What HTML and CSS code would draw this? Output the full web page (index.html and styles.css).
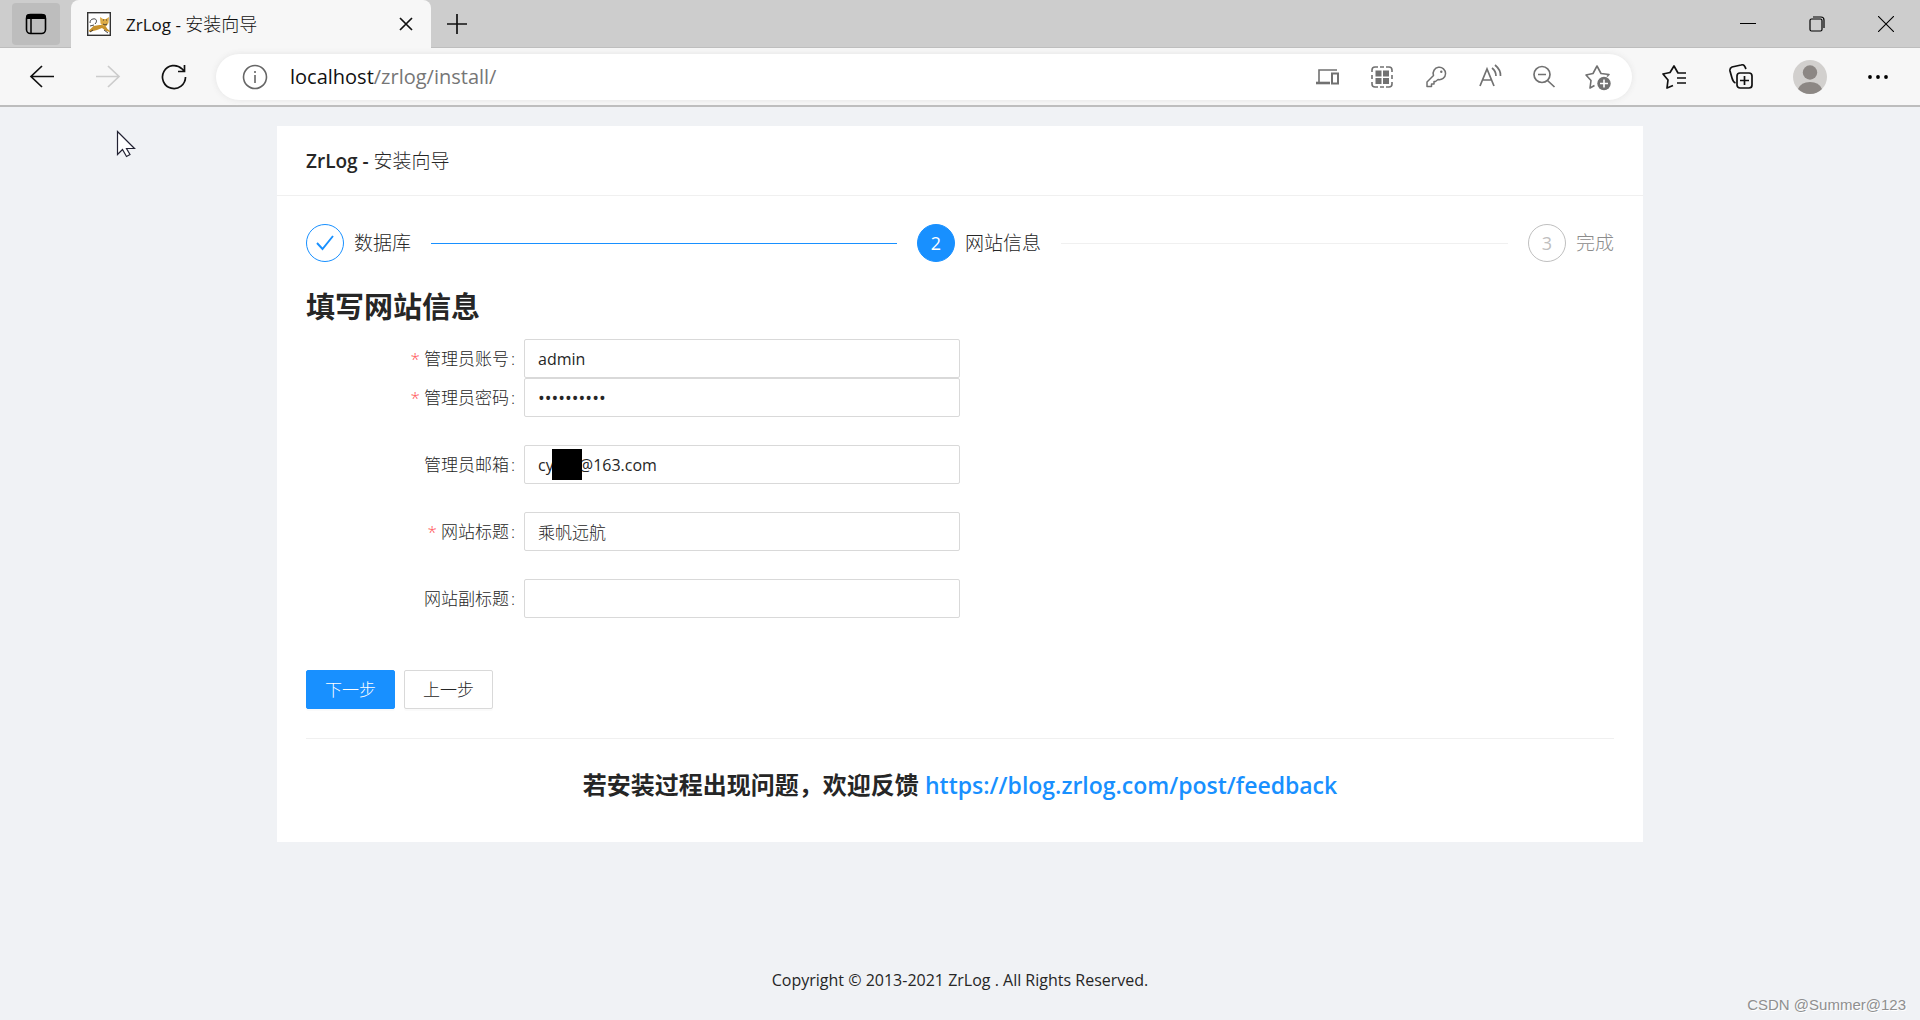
FILE: index.html
```html
<!DOCTYPE html>
<html lang="zh-CN">
<head>
<meta charset="utf-8">
<title>ZrLog - 安装向导</title>
<link rel="stylesheet" href="styles.css">
</head>
<body>
<header class="browser">
  <div class="tabstrip">
    <button class="tab-actions" type="button" aria-label="Tab actions">
      <svg width="24" height="24" viewBox="0 0 24 24"><rect x="2.500" y="2.500" width="19" height="19" rx="4" fill="none" stroke="#000" stroke-width="1.600"/><path d="M2 7V5a3 3 0 0 1 3-3h14a3 3 0 0 1 3 3v2z"/><path d="M7 7v14" stroke="#000" stroke-width="1.500"/></svg>
    </button>
    <div class="tab">
      <svg class="favicon" width="24" height="24" viewBox="0 0 24 24"><rect x=".7" y=".7" width="22.600" height="22.600" fill="#fff" stroke="#333" stroke-width="1.400"/><path d="M1.500 19l5-5 6-1 3 0 3 1 2 3 2.500 2v1l-4-1-4-3-5 2-4 1-3 1z" fill="#c8922c"/><path d="M13 5l3 2h3l3-2-.5 6-2 3-3 .5-3-3z" fill="#dcaa45"/><path d="M16 8h1M19 8h1M16 12l2 1 2-1M8 12c3-3 1-6-2-5-2 0-3 2-3 4M3 14l4-1M3 20l3-2M17 18l4 3" stroke="#333" stroke-width=".9" fill="none"/></svg>
      <span class="tab-title">ZrLog - <span class="cjk">安装向导</span></span>
      <button class="icon-button tab-close" type="button" aria-label="Close tab"><svg width="14" height="14" viewBox="0 0 14 14"><path d="M1 1l12 12M13 1L1 13" stroke="#111" stroke-width="1.700"/></svg></button>
    </div>
    <button class="icon-button new-tab" type="button" aria-label="New tab"><svg width="22" height="22" viewBox="0 0 22 22"><path d="M11 1v20M1 11h20" stroke="#111" stroke-width="1.700"/></svg></button>
    <div class="window-controls">
      <button class="icon-button" type="button" aria-label="Minimize"><svg width="16" height="16" viewBox="0 0 16 16"><path d="M0 7.500h16" stroke="#000"/></svg></button>
      <button class="icon-button" type="button" aria-label="Restore"><svg width="16" height="16" viewBox="0 0 16 16" fill="none" stroke="#000" stroke-width="1.200"><rect x="1" y="3" width="12" height="12" rx="1.500"/><path d="M4 1h8q3 0 3 3v8"/></svg></button>
      <button class="icon-button" type="button" aria-label="Close"><svg width="16" height="16" viewBox="0 0 16 16"><path d="M0 0l16 16M16 0L0 16" stroke="#000" stroke-width="1.100"/></svg></button>
    </div>
  </div>
  <div class="toolbar">
    <nav class="history" aria-label="History">
      <button class="icon-button" type="button" aria-label="Back"><svg width="26" height="26" viewBox="0 0 26 26" fill="none" stroke="#111" stroke-width="1.700"><path d="M25 12.500H2M13 2L2 12.500l11 10.500"/></svg></button>
      <button class="icon-button" type="button" aria-label="Forward"><svg width="26" height="26" viewBox="0 0 26 26" fill="none" stroke="#ccc" stroke-width="1.700"><path d="M1 12.500h23M13 2l11 10.500-11 10.500"/></svg></button>
      <button class="icon-button" type="button" aria-label="Refresh"><svg width="26" height="26" viewBox="0 0 26 26" fill="none" stroke="#111" stroke-width="1.700"><path d="M24.500 13A11.500 11.500 0 1 1 21 4.800L23 7M23.500 1v6.500H17"/></svg></button>
    </nav>
    <div class="address">
      <svg width="26" height="26" viewBox="0 0 26 26" fill="none" stroke="#666" stroke-width="1.600"><circle cx="13" cy="13" r="11.500"/><path d="M13 11v8M13 7v2"/></svg>
      <p class="url">localhost<span class="url-path">/zrlog/install/</span></p>
      <div class="address-icons">
        <button class="icon-button" type="button" aria-label="Devices"><svg width="24" height="24" viewBox="0 0 24 24" fill="none" stroke="#717171"><path d="M3 17V5h18" stroke-width="1.600"/><path d="M0 18h14" stroke-width="2.600"/><rect x="16" y="8.500" width="6" height="10" stroke-width="2"/></svg></button>
        <button class="icon-button" type="button" aria-label="QR code"><svg width="24" height="24" viewBox="0 0 24 24" fill="none" stroke="#717171" stroke-width="1.600"><path d="M2 7V5q0-3 3-3h3M10 2h4M16 2h3q3 0 3 3v2M2 10v4M22 10v4M2 17v2q0 3 3 3h3M10 22h4M16 22h3q3 0 3-3v-2"/><path fill="#717171" stroke="none" d="M5.500 5.500h6v6h-6zM13 5.500h6v6h-6zM5.500 13h6v6h-6zM13 13h6v6h-6z"/></svg></button>
        <button class="icon-button" type="button" aria-label="Passwords"><svg width="24" height="24" viewBox="0 0 24 24" fill="none" stroke="#717171" stroke-width="1.500"><path d="M9.500 10.500A6.200 6.200 0 1 1 14 14.500L11.500 16.500H10V19H7.500V21.500H3V17z" stroke-linejoin="round"/><circle cx="17.300" cy="6.700" r="1.200" fill="#717171" stroke="none"/></svg></button>
        <button class="icon-button" type="button" aria-label="Read aloud"><svg width="26" height="28" viewBox="0 0 26 28" fill="none" stroke="#717171" stroke-width="1.700"><path d="M3 23L10 6 17 23M5.500 17h9M15 5q4 3 4 8M18 2q6 5 5.500 11"/></svg></button>
        <button class="icon-button" type="button" aria-label="Zoom out"><svg width="24" height="26" viewBox="0 0 24 26" fill="none" stroke="#717171" stroke-width="1.700"><circle cx="10" cy="10.500" r="8"/><path d="M15.500 16.500l7 6.500M6 10.500h8"/></svg></button>
        <button class="icon-button" type="button" aria-label="Add favorite"><svg width="28" height="30" viewBox="0 0 28 30"><path d="M10.500 23.500L6 26l1-7.500-5-5.500 7-1.500L13 4l4 7.500 8 1-2 2" fill="none" stroke="#717171" stroke-width="1.600" stroke-linejoin="round"/><circle cx="20" cy="21.500" r="6.700" fill="#717171"/><path d="M20 17.500v8M16 21.500h8" stroke="#fff" stroke-width="1.600"/></svg></button>
      </div>
    </div>
    <div class="tools">
      <button class="icon-button" type="button" aria-label="Favorites"><svg width="26" height="28" viewBox="0 0 26 28" fill="none" stroke="#111" stroke-width="1.700"><path d="M12 22.500L6 25l1-8-5-6 7-1.500L13 3l4 7h8M16 15h9M16 20h9" stroke-linejoin="round"/></svg></button>
      <button class="icon-button" type="button" aria-label="Collections"><svg width="26" height="28" viewBox="0 0 26 28" fill="none" stroke="#111" stroke-width="1.700"><path d="M6.500 20Q4 19 3 15L1 8Q0.500 5 3 4l9-2q3-1 4 2l1 2"/><rect x="8" y="10" width="15" height="15" rx="3"/><path d="M15.500 13v9M11 17.500h9"/></svg></button>
      <button class="icon-button" type="button" aria-label="Profile"><svg width="34" height="34" viewBox="0 0 34 34"><circle cx="17" cy="17" r="17" fill="#d2d0ce"/><circle cx="17" cy="12.500" r="7.200" fill="#8c8784"/><path d="M5 29q3-7 12-7t12 7q-5 5-12 5T5 29z" fill="#8c8784"/></svg></button>
      <button class="icon-button" type="button" aria-label="Settings"><svg width="22" height="6" viewBox="0 0 22 6"><circle cx="3" cy="3" r="1.900"/><circle cx="11" cy="3" r="1.900"/><circle cx="19" cy="3" r="1.900"/></svg></button>
    </div>
  </div>
</header>
<main class="page">
  <section class="card">
    <h1 class="card-title">ZrLog - <span class="cjk">安装向导</span></h1>
    <div class="card-body">
      <ol class="steps">
        <li class="step step-done"><span class="step-icon"><svg width="18" height="18" viewBox="0 0 18 18"><path d="M1 9l5.500 6L17 2" fill="none" stroke="#1890ff" stroke-width="1.900"/></svg></span><span class="step-name">数据库</span></li>
        <li class="step step-active"><span class="step-icon">2</span><span class="step-name">网站信息</span></li>
        <li class="step step-wait"><span class="step-icon">3</span><span class="step-name">完成</span></li>
      </ol>
      <h2 class="form-title">填写网站信息</h2>
      <form class="form">
        <div class="field tight"><label class="required" for="user">管理员账号</label><input id="user" type="text" value="admin"></div>
        <div class="field"><label class="required" for="pass">管理员密码</label><input id="pass" class="input-password" type="password" value="abcdefghij"></div>
        <div class="field"><label for="mail">管理员邮箱</label><div class="masked"><input id="mail" type="text" value="cyxxx@163.com"><span class="mask"></span></div></div>
        <div class="field"><label class="required" for="title">网站标题</label><input id="title" class="input-cjk" type="text" value="乘帆远航"></div>
        <div class="field"><label for="subtitle">网站副标题</label><input id="subtitle" class="input-cjk" type="text"></div>
        <div class="actions"><button class="btn btn-primary" type="button">下一步</button><button class="btn" type="button">上一步</button></div>
      </form>
      <h3 class="feedback">若安装过程出现问题，欢迎反馈 <a href="https://blog.zrlog.com/post/feedback">https://blog.zrlog.com/post/feedback</a></h3>
    </div>
  </section>
  <footer class="footer">Copyright © 2013-2021 ZrLog . All Rights Reserved.</footer>
</main>
<svg class="cursor" width="20" height="28" viewBox="0 0 20 28"><path d="M1.500 1.500v23l5-5 4 7 3.500-2-3.500-6h8z" fill="#fff" stroke="#223" stroke-width="1.200"/></svg>
<span class="watermark">CSDN @Summer@123</span>
</body>
</html>
```
FILE: styles.css
```css
* { box-sizing: border-box; }

body {
  margin: 0;
  min-height: 100vh;
  display: flex;
  flex-direction: column;
  background: #f0f2f5;
  color: #262626;
  font: 16px/26px "Open Sans", "Noto Sans CJK SC", sans-serif;
}

button, input { font: inherit; color: inherit; }
h1, h2, h3, p, ol { margin: 0; padding: 0; }
svg { display: block; flex: none; }
.cjk { font-size: 18px; font-weight: 300; }

/* Browser frame */
.browser { background: #f7f7f7; border-bottom: 2px solid #bdbdbd; }
.tabstrip {
  height: 48px;
  display: flex;
  align-items: stretch;
  background: #cdcdcd;
  box-shadow: inset 0 -1px #bdbdbd;
}
.icon-button, .tab-actions {
  display: flex;
  align-items: center;
  justify-content: center;
  padding: 0;
  border: 0;
  background: none;
}
.tab-actions {
  width: 48px;
  margin: 3px 11px 3px 12px;
  border-radius: 4px;
  background: #bdbdbd;
}
.tab {
  width: 360px;
  display: flex;
  align-items: center;
  padding: 0 18px 0 16px;
  border-radius: 8px 8px 0 0;
  background: #f7f7f7;
  color: #111;
}
.tab-title { flex: 1; margin-left: 15px; font-size: 17px; }
.new-tab { width: 52px; }
.window-controls { display: flex; margin-left: auto; }
.window-controls .icon-button { width: 69px; }

.toolbar { display: flex; align-items: center; height: 57px; }
.history { display: flex; width: 216px; padding-left: 9px; }
.history .icon-button { width: 66px; }
.address {
  flex: 1;
  height: 46px;
  display: flex;
  align-items: center;
  padding: 0 21px 0 26px;
  border-radius: 23px;
  background: #fff;
  box-shadow: 0 0 6px #e4e4e4;
}
.url { margin-left: 22px; color: #111; font-size: 20px; }
.url-path { color: #767676; }
.address-icons { display: flex; gap: 28px; margin-left: auto; }
.address-icons .icon-button { width: 26px; }
.tools { display: flex; width: 288px; padding-left: 8px; }
.tools .icon-button { width: 68px; }

/* Page */
.page {
  flex: 1;
  display: flex;
  flex-direction: column;
  padding: 19px 277px 27px;
}
.card { background: #fff; }
.card-title {
  padding: 21px 29px 20px;
  border-bottom: 1px solid #f0f0f0;
  font-size: 19px;
  line-height: 28px;
  font-weight: 600;
}
.card-title .cjk { font-size: 19px; }
.card-body { padding: 28px 29px 38px; }

.steps { display: flex; gap: 20px; list-style: none; }
.step { flex: 1; display: flex; align-items: center; font-size: 19px; line-height: 38px; }
.step:last-child { flex: none; }
.step-name { font-weight: 300; }
.step-icon {
  flex: none;
  width: 38px;
  height: 38px;
  display: flex;
  align-items: center;
  justify-content: center;
  margin-right: 10px;
  border: 1px solid #1890ff;
  border-radius: 50%;
  font-size: 18px;
}
.step:not(:last-child)::after { content: ""; flex: 1; height: 1px; margin-left: 20px; background: #f0f0f0; }
.step.step-done:not(:last-child)::after { background: #1890ff; }
.step-active .step-icon { background: #1890ff; color: #fff; }
.step-wait { color: #8c8c8c; }
.step-wait .step-icon { border-color: #bfbfbf; color: #bfbfbf; }

.form-title { margin: 26px 0 13px; font-size: 29px; line-height: 38px; font-weight: 700; }

.field {
  display: grid;
  grid-template-columns: 1fr 2fr 3fr;
  margin-bottom: 28px;
  font-size: 17px;
}
.field.tight { margin-bottom: 0; }
.field label { padding-right: 9px; text-align: right; line-height: 39px; font-weight: 300; white-space: nowrap; }
.field label::after { content: ":"; margin-left: 2px; }
.required::before { content: "*"; margin-right: 4px; color: #ff4d4f; }
.field input {
  width: 100%;
  height: 39px;
  padding: 0 13px;
  border: 1px solid #d9d9d9;
  border-radius: 2px;
  background: #fff;
  font-size: 16px;
}
.field .input-cjk { font-size: 17px; font-weight: 300; }
.field .input-password { font-size: 18px; }
.masked { position: relative; }
.mask { position: absolute; left: 28px; top: 4px; width: 30px; height: 31px; background: #000; }

.actions { display: flex; gap: 9px; margin-top: 52px; }
.btn {
  height: 39px;
  padding: 0 18px;
  border: 1px solid #d9d9d9;
  border-radius: 2px;
  background: #fff;
  box-shadow: 0 2px 0 #00000005;
  font-size: 17px;
  font-weight: 300;
}
.btn-primary { border-color: #1890ff; background: #1890ff; color: #fff; }

.feedback {
  margin-top: 29px;
  padding-top: 27px;
  border-top: 1px solid #f0f0f0;
  text-align: center;
  font-size: 24px;
  line-height: 38px;
  font-weight: 700;
}
.feedback a { color: #1890ff; font-size: 23px; font-weight: 600; text-decoration: none; }

.footer { margin-top: auto; text-align: center; }

.cursor { position: absolute; left: 116px; top: 130px; }
.watermark {
  position: absolute;
  right: 14px;
  bottom: 4px;
  color: #8f8f8f;
  font: 15px/22px "Liberation Sans", sans-serif;
  text-shadow: 1px 1px #fff;
}
```
